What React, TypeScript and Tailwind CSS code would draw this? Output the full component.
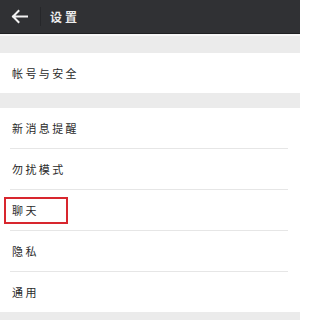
import React from "react";

const font = { fontFamily: '"Noto Sans CJK SC", "Noto Sans", sans-serif' };

function Row({ label, boxed }: { label: string; boxed?: boolean }) {
  return (
    <div className="relative flex h-10 items-center bg-white pl-[12px]">
      <span className="text-[11px] leading-none tracking-[2.4px] text-[#2a2a2a]">{label}</span>
      {boxed && (
        <div className="absolute left-[4px] top-[7px] h-[27px] w-[64px] border-2 border-[#d8262e]" />
      )}
    </div>
  );
}

function Sep() {
  return (
    <div className="flex h-px bg-white">
      <div className="ml-[10px] mr-[12px] h-px flex-1 bg-[#e6e6e6]" />
    </div>
  );
}

export default function App() {
  return (
    <div className="flex h-[320px] w-[300px] flex-col overflow-hidden bg-[#ebebeb]" style={font}>
      <div className="flex h-[33px] items-center bg-[#303134]">
        <svg width="40" height="33" viewBox="0 0 40 33" className="shrink-0">
          <path d="M13 16.5 H27 M18.5 11 L13 16.5 L18.5 22" stroke="#f2f2f2" strokeWidth="2" fill="none" strokeLinecap="square" />
        </svg>
        <div className="h-[19px] w-px bg-[#26272a]" />
        <span className="ml-[9px] text-[12px] font-bold leading-none tracking-[3px] text-[#ececec]">设置</span>
      </div>
      <div className="h-px bg-[#1f2022]" />
      <div className="h-[2px] bg-[#f7f7f7]" />
      <div className="h-[17px]" />
      <Row label="帐号与安全" />
      <div className="h-[15px]" />
      <Row label="新消息提醒" />
      <Sep />
      <Row label="勿扰模式" />
      <Sep />
      <Row label="聊天" boxed />
      <Sep />
      <Row label="隐私" />
      <Sep />
      <Row label="通用" />
    </div>
  );
}
